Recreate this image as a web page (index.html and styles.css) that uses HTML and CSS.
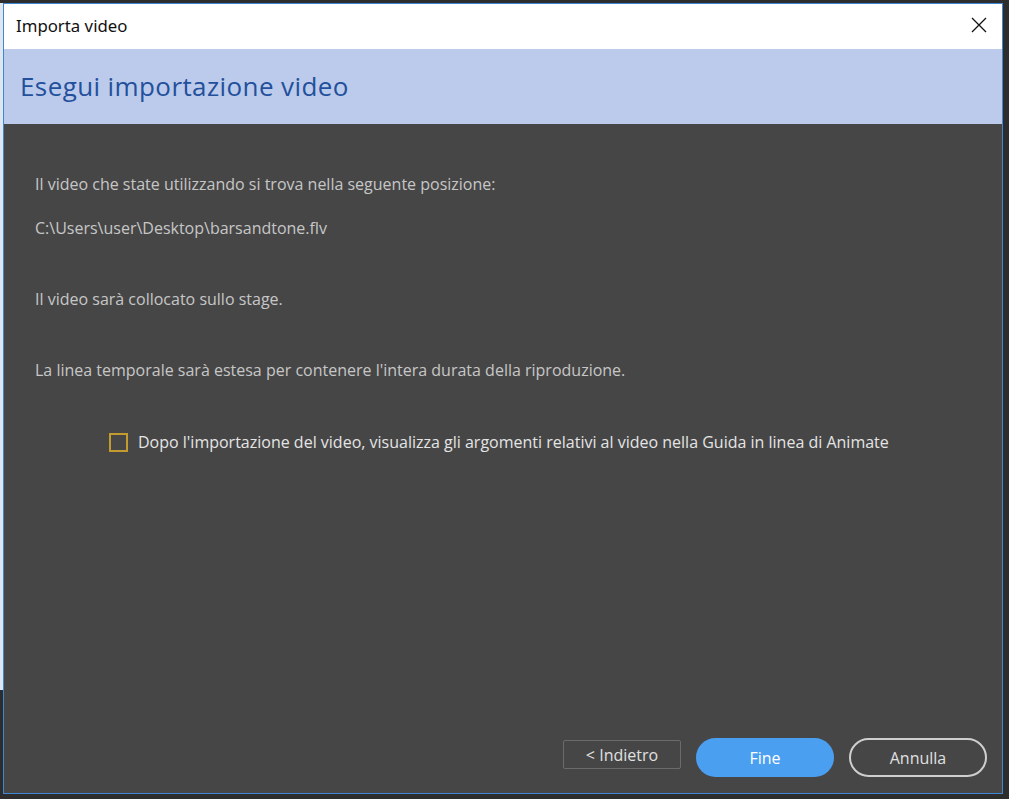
FILE: index.html
```html
<!DOCTYPE html>
<html lang="it">
<head>
  <meta charset="UTF-8" />
  <title>Importa video</title>
  <link rel="stylesheet" href="styles.css">
</head>
<body>
  <div class="window">
    <div class="titlebar">
      <span class="title">Importa video</span>
      <svg class="close" width="16" height="16" viewBox="0 0 16 16">
        <path d="M1 1 L15 15 M15 1 L1 15" stroke="#111" stroke-width="1.3" fill="none" />
      </svg>
    </div>

    <div class="header">
      <h1>Esegui importazione video</h1>
    </div>

    <div class="content">
      <p class="line first">Il video che state utilizzando si trova nella seguente posizione:</p>
      <p class="line path">C:\Users\user\Desktop\barsandtone.flv</p>
      <p class="line gap">Il video sarà collocato sullo stage.</p>
      <p class="line gap">La linea temporale sarà estesa per contenere l'intera durata della riproduzione.</p>
      <label class="check">
        <span class="box"></span>
        Dopo l'importazione del video, visualizza gli argomenti relativi al video nella Guida in linea di Animate
      </label>
    </div>

    <div class="footer">
      <button class="btn back">&lt; Indietro</button>
      <button class="btn primary">Fine</button>
      <button class="btn cancel">Annulla</button>
    </div>
  </div>
</body>
</html>
```

FILE: styles.css
```css
html, body {
  margin: 0;
  height: 100%;
}
body {
  background: linear-gradient(#dfe6ef, #dfe6ef) 0 3px / 3px 687px no-repeat, #2d2d2d;
  font-family: "Open Sans", "Noto Sans", sans-serif;
  padding: 3px 6px 5px 3px;
  box-sizing: border-box;
}
.window {
  height: 791px;
  box-sizing: border-box;
  border: 1px solid #3f87d2;
  background: #464646;
  display: flex;
  flex-direction: column;
}
.titlebar {
  height: 45px;
  background: #ffffff;
  display: flex;
  align-items: center;
  justify-content: space-between;
  padding: 0 15px 0 12px;
}
.titlebar .title {
  font-family: "Noto Sans", sans-serif;
  font-size: 16.8px;
  color: #111;
  margin-top: -2px;
}
.close {
  margin-top: -4px;
}
.header {
  height: 75px;
  background: #bccbeb;
  display: flex;
  align-items: center;
  padding-left: 16px;
}
.header h1 {
  margin: 0 0 2px;
  font-weight: normal;
  font-size: 26px;
  color: #23509c;
  letter-spacing: 0.4px;
}
.content {
  flex: 1;
  padding: 50px 31px 0;
}
.line {
  margin: 0;
  font-size: 16px;
  line-height: 20px;
  color: #c6c6c6;
}
.line.path {
  margin-top: 24px;
}
.line.gap {
  margin-top: 51px;
}
.check {
  display: flex;
  align-items: center;
  gap: 10px;
  margin: 52px 0 0 74px;
  font-size: 16px;
  line-height: 20px;
  color: #e4e4e4;
}
.box {
  width: 15px;
  height: 15px;
  border: 2px solid #c29a2e;
  flex: none;
}
.footer {
  display: flex;
  justify-content: flex-end;
  align-items: flex-start;
  gap: 15px;
  padding: 0 15px 16px 0;
}
.btn {
  font-family: "Open Sans", "Noto Sans", sans-serif;
  font-size: 16px;
  cursor: pointer;
  color: #e0e0e0;
  background: transparent;
}
.back {
  width: 118px;
  height: 29px;
  margin-top: 2px;
  border: 1px solid #6b6b6b;
  border-radius: 2px;
}
.primary {
  width: 138px;
  height: 39px;
  border: none;
  border-radius: 20px;
  background: #4b9ff1;
  color: #fff;
}
.cancel {
  width: 138px;
  height: 39px;
  border: 2px solid #cfcfcf;
  border-radius: 20px;
}
```
